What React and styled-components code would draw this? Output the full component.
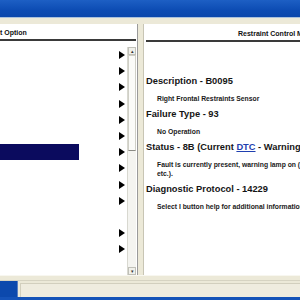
import React from "react"
import styled, { createGlobalStyle } from "styled-components"

const GlobalStyle = createGlobalStyle`
  html, body {
    margin: 0;
    padding: 0;
    background: #ece9d8;
  }
`

const Screen = styled.div`
  width: 300px;
  height: 300px;
  display: flex;
  flex-direction: column;
  background: #ece9d8;
  overflow: hidden;
  font-family: "Liberation Sans", Arial, sans-serif;
`

const TitleBar = styled.div`
  height: 17px;
  flex: none;
  background: linear-gradient(#1d5fc4, #0d4cb3 60%, #0a47ab);
  border-bottom: 1px solid #a9c0dc;
`

const Body = styled.div`
  flex: none;
  height: 251px;
  margin-top: 6px;
  display: flex;
`

const LeftPanel = styled.div`
  width: 137px;
  flex: none;
  background: #fff;
  border-right: 1px solid #9a9a9a;
  display: flex;
  flex-direction: column;
  overflow: hidden;
`

const Divider = styled.div`
  width: 5px;
  flex: none;
  background: #ece9d8;
  border-right: 1px solid #c8c5b4;
`

const RightPanel = styled.div`
  flex: 1;
  background: #fff;
  display: flex;
  flex-direction: column;
  overflow: hidden;
`

const PanelHeader = styled.div`
  height: 15px;
  flex: none;
  margin: ${p => (p.$right ? "1px 0 0 2px" : "0 1px 0 0")};
  border-bottom: 2px solid #3a3a3a;
  font-size: 7px;
  font-weight: bold;
  color: #111;
  line-height: 17px;
  white-space: nowrap;
  padding-left: ${p => p.$indent || 0}px;
`

const ListArea = styled.div`
  flex: 1;
  display: flex;
  padding-top: 6px;
  min-height: 0;
`

const List = styled.div`
  flex: 1;
  display: flex;
  flex-direction: column;
`

const Row = styled.div`
  height: 16.2px;
  flex: none;
  display: flex;
  align-items: center;
  justify-content: space-between;
  padding-right: 2px;
`

const Highlight = styled.div`
  width: 79px;
  height: 16px;
  background: ${p => (p.$on ? "#0b0b5e" : "transparent")};
`

const Scrollbar = styled.div`
  width: 8px;
  flex: none;
  margin-right: 1px;
  display: flex;
  flex-direction: column;
  background: #f4f4f0;
  border-left: 1px solid #d8d8d0;
`

const ScrollBtn = styled.div`
  height: 8px;
  flex: none;
  display: flex;
  align-items: center;
  justify-content: center;
  background: #f0f0ea;
  border: 1px solid #c0c0b8;
  box-sizing: border-box;
  font-size: 5px;
  color: #333;
`

const Thumb = styled.div`
  height: 96px;
  flex: none;
  background: #fbfbf8;
  border: 1px solid #cfcfc6;
  border-bottom-color: #8a8a84;
  box-sizing: border-box;
`

const Track = styled.div`
  flex: 1;
`

const Content = styled.div`
  padding: 31px 0 0 2px;
  display: flex;
  flex-direction: column;
  white-space: nowrap;
`

const Heading = styled.div`
  font-size: 9.3px;
  font-weight: bold;
  color: #151515;
  height: 16px;
  line-height: 16px;
`

const Note = styled.div`
  font-size: 6.8px;
  font-weight: bold;
  color: #1a1a1a;
  padding-left: 11px;
  line-height: 9px;
  margin: 5px 0 3px;
`

const Link = styled.span`
  color: #1f3fb0;
  text-decoration: underline;
`

const StatusArea = styled.div`
  flex: 1;
  display: flex;
  flex-direction: column;
  border-top: 1px solid #f8f7f0;
`

const StatusRow = styled.div`
  margin-top: 4px;
  flex: 1;
  display: flex;
  border-top: 1px solid #d6d3c2;
`

const StartBlock = styled.div`
  width: 17px;
  background: #0c49ad;
  border-right: 1px solid #5b7fc0;
`

const StatusField = styled.div`
  flex: 1;
  margin: 2px 0 0 2px;
  border: 1px solid #d2cfbe;
  border-right: none;
  border-bottom: none;
  background: #efecdf;
`

const Taskbar = styled.div`
  height: 3px;
  flex: none;
  background: #1553b8;
`

const Arrow = () => (
  <svg width="6" height="8" viewBox="0 0 6 8">
    <polygon points="0,0 6,4 0,8" fill="#000" />
  </svg>
)

const rows = [true, true, true, true, true, true, true, true, true, true, false, true, true, false, false]

export default function App() {
  return (
    <Screen>
      <GlobalStyle />
      <TitleBar />
      <Body>
        <LeftPanel>
          <PanelHeader>t Option</PanelHeader>
          <ListArea>
            <List>
              {rows.map((hasArrow, i) => (
                <Row key={i}>
                  <Highlight $on={i === 6} />
                  {hasArrow && <Arrow />}
                </Row>
              ))}
            </List>
            <Scrollbar>
              <ScrollBtn>▴</ScrollBtn>
              <Thumb />
              <Track />
              <ScrollBtn>▾</ScrollBtn>
            </Scrollbar>
          </ListArea>
        </LeftPanel>
        <Divider />
        <RightPanel>
          <PanelHeader $right $indent={92}>Restraint Control Module</PanelHeader>
          <Content>
            <Heading>Description - B0095</Heading>
            <Note>Right Frontal Restraints Sensor</Note>
            <Heading>Failure Type - 93</Heading>
            <Note>No Operation</Note>
            <Heading>Status - 8B (Current <Link>DTC</Link> - Warning Lamp On)</Heading>
            <Note>
              Fault is currently present, warning lamp on (<Link>MIL</Link>,
              <br />
              etc.).
            </Note>
            <Heading>Diagnostic Protocol - 14229</Heading>
            <Note>Select I button help for additional information</Note>
          </Content>
        </RightPanel>
      </Body>
      <StatusArea>
        <StatusRow>
          <StartBlock />
          <StatusField />
        </StatusRow>
      </StatusArea>
      <Taskbar />
    </Screen>
  )
}
